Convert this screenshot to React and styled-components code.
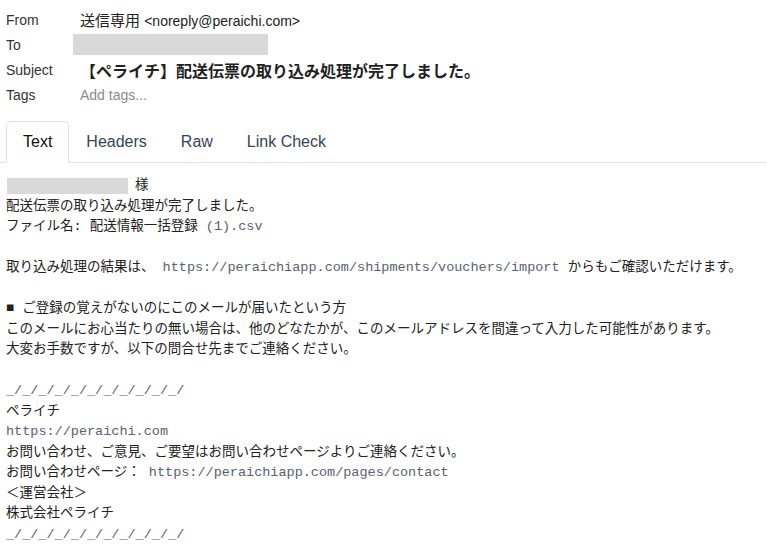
import React from "react";
import styled, { createGlobalStyle } from "styled-components";

const GlobalStyle = createGlobalStyle`
  html, body {
    margin: 0;
    padding: 0;
    background: #ffffff;
  }
  body {
    font-family: "Liberation Sans", "Noto Sans CJK JP", sans-serif;
    color: #222;
  }
`;

const Page = styled.div`
  width: 767px;
  height: 553px;
  overflow: hidden;
  background: #fff;
`;

const Meta = styled.div`
  padding: 7px 0 0 6px;
  display: flex;
  flex-direction: column;
`;

const MetaRow = styled.div`
  display: grid;
  grid-template-columns: 74px 1fr;
  align-items: center;
  height: 25px;
`;

const Label = styled.span`
  font-size: 14px;
  color: #333;
`;

const Value = styled.span`
  font-size: ${(p) => (p.$big ? "16px" : "15px")};
  font-weight: ${(p) => (p.$big ? 700 : 400)};
  color: ${(p) => (p.$muted ? "#8a8a8a" : "#222")};
  white-space: nowrap;
`;

const SmallValue = styled.span`
  font-size: 14px;
`;

const Redacted = styled.span`
  display: inline-block;
  width: ${(p) => p.$w}px;
  height: ${(p) => p.$h}px;
  background: #d9d9d9;
  vertical-align: middle;
  margin-left: ${(p) => p.$ml || 0}px;
`;

const Tabs = styled.div`
  margin-top: 14px;
  padding-left: 6px;
  display: flex;
  border-bottom: 1px solid #dee2e6;
`;

const Tab = styled.div`
  height: 40px;
  box-sizing: border-box;
  padding: 0 16px;
  display: flex;
  align-items: center;
  font-size: 16px;
  margin-bottom: -1px;
  border: 1px solid ${(p) => (p.$active ? "#dee2e6" : "transparent")};
  border-bottom-color: ${(p) => (p.$active ? "#fff" : "transparent")};
  border-radius: 5px 5px 0 0;
  background: ${(p) => (p.$active ? "#fff" : "transparent")};
  color: ${(p) => (p.$active ? "#111" : "#34445a")};
  height: 42px;
`;

const Body = styled.div`
  padding: 13px 0 0 6px;
  font-family: "Liberation Mono", "Noto Sans CJK JP", monospace;
  font-size: 13.5px;
  line-height: 20.5px;
  color: #222;
  white-space: pre;
`;

const Line = styled.div`
  height: 20.5px;
  display: flex;
  align-items: center;
`;

const Mono = styled.span`
  color: #5a6270;
`;

const Salutation = styled.span`
  margin-left: 7px;
`;

const lines = [
  null,
  "配送伝票の取り込み処理が完了しました。",
  <>ファイル名: 配送情報一括登録<Mono> (1).csv</Mono></>,
  "",
  <>取り込み処理の結果は、<Mono> https://peraichiapp.com/shipments/vouchers/import </Mono>からもご確認いただけます。</>,
  "",
  "■ ご登録の覚えがないのにこのメールが届いたという方",
  "このメールにお心当たりの無い場合は、他のどなたかが、このメールアドレスを間違って入力した可能性があります。",
  "大変お手数ですが、以下の問合せ先までご連絡ください。",
  "",
  <Mono>_/_/_/_/_/_/_/_/_/_/_/</Mono>,
  "ペライチ",
  <Mono>https://peraichi.com</Mono>,
  "お問い合わせ、ご意見、ご要望はお問い合わせページよりご連絡ください。",
  <>お問い合わせページ：<Mono> https://peraichiapp.com/pages/contact</Mono></>,
  "＜運営会社＞",
  "株式会社ペライチ",
  <Mono>_/_/_/_/_/_/_/_/_/_/_/</Mono>,
];

export default function App() {
  return (
    <Page>
      <GlobalStyle />
      <Meta>
        <MetaRow>
          <Label>From</Label>
          <Value>
            送信専用 <SmallValue>&lt;noreply@peraichi.com&gt;</SmallValue>
          </Value>
        </MetaRow>
        <MetaRow>
          <Label>To</Label>
          <span>
            <Redacted $w={195} $h={21} $ml={-7} />
          </span>
        </MetaRow>
        <MetaRow>
          <Label>Subject</Label>
          <Value $big>【ペライチ】配送伝票の取り込み処理が完了しました。</Value>
        </MetaRow>
        <MetaRow>
          <Label>Tags</Label>
          <Value $muted>
            <SmallValue>Add tags...</SmallValue>
          </Value>
        </MetaRow>
      </Meta>

      <Tabs>
        <Tab $active>Text</Tab>
        <Tab>Headers</Tab>
        <Tab>Raw</Tab>
        <Tab>Link Check</Tab>
      </Tabs>

      <Body>
        {lines.map((l, i) =>
          l === null ? (
            <Line key={i}>
              <Redacted $w={121} $h={16} $ml={1} />
              <Salutation>様</Salutation>
            </Line>
          ) : (
            <Line key={i}>{l}</Line>
          )
        )}
      </Body>
    </Page>
  );
}
